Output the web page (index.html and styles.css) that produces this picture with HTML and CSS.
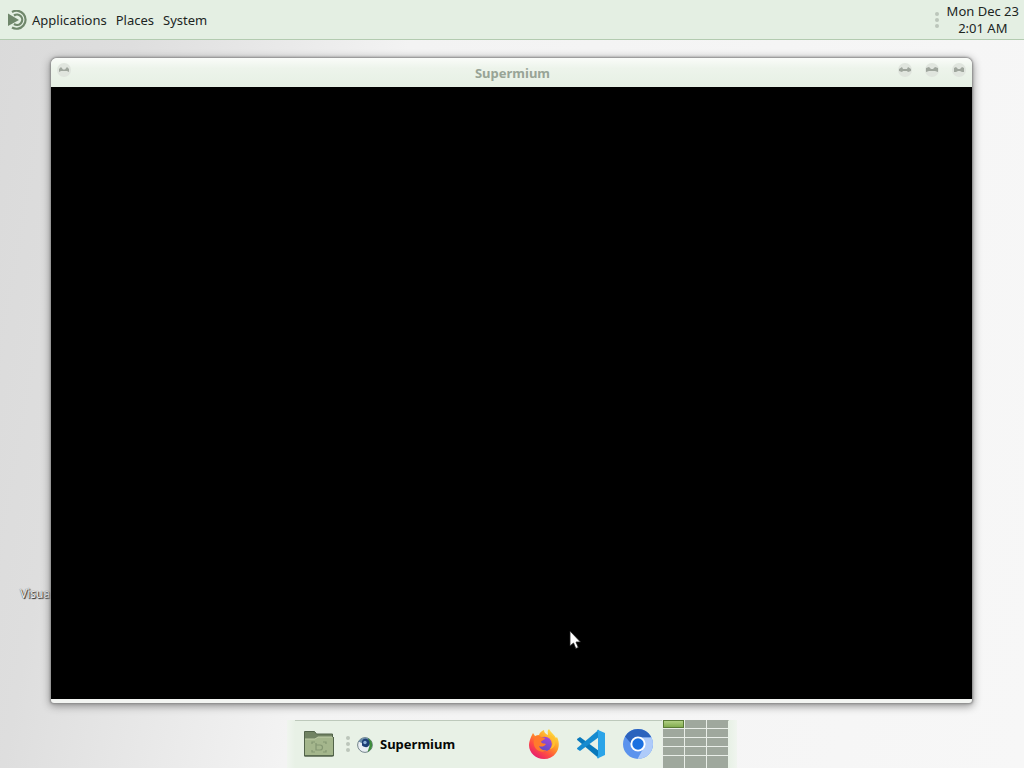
FILE: index.html
```html
<!DOCTYPE html>
<html lang="en">
<head>
<meta charset="utf-8">
<title>Desktop</title>
<link rel="stylesheet" href="styles.css">
</head>
<body>
<header class="panel">
  <nav class="menus">
    <button class="menu menu-main" type="button">
      <svg class="menu-logo" viewBox="0 0 20 20" aria-hidden="true">
        <path d="M0 3.500 11 10 0 16z" fill="#6f876b"/>
        <path d="M4 2A9 9 0 1 1 4 17.500M6 5.500A5.200 5.200 0 1 1 6 14" fill="none" stroke="#6f876b" stroke-width="2.200"/>
      </svg>
      <span>Applications</span>
    </button>
    <button class="menu" type="button">Places</button>
    <button class="menu" type="button">System</button>
  </nav>
  <div class="tray">
    <span class="grip"><i></i><i></i><i></i></span>
    <button class="clock" type="button">Mon Dec 23<br>2:01 AM</button>
  </div>
</header>

<main class="desktop">
  <a class="shortcut" href="#">Visual</a>
  <section class="window">
    <div class="titlebar">
      <button class="knob" type="button" aria-label="Window menu"><svg viewBox="0 0 16 16"><circle cx="8" cy="8" r="7"/><path d="M3 10V7l2-2 2 2.500h2L11 5l2 2v3l-2-1H5z"/></svg></button>
      <h1 class="title">Supermium</h1>
      <div class="knobs">
        <button class="knob" type="button" aria-label="Minimize"><svg viewBox="0 0 16 16"><circle cx="8" cy="8" r="7"/><path d="M2 9V7l3-2 1 2h4l1-2 3 2v2l-3 1-1-1H6l-1 1z"/></svg></button>
        <button class="knob" type="button" aria-label="Maximize"><svg viewBox="0 0 16 16"><circle cx="8" cy="8" r="7"/><path d="M2 10V6l3-1 2 2h2l2-2 3 1v4l-3-1H5z"/></svg></button>
        <button class="knob" type="button" aria-label="Close"><svg viewBox="0 0 16 16"><circle cx="8" cy="8" r="7"/><path d="M3 10V6l2-1 2 2h2l2-2 2 1v4h-2l-2-1H7l-2 1z"/></svg></button>
      </div>
    </div>
    <div class="content"></div>
  </section>
</main>

<footer class="dock">
  <div class="dock-bar">
    <button class="launcher folder" type="button" aria-label="Files">
      <svg viewBox="0 0 32 32">
        <path d="M1.500 28V3.500h10l2 2.500h16v22z" fill="#718363" stroke="#52634a"/>
        <path d="M2 27V11h10l3-2h15v18z" fill="#a4b68c"/>
        <path d="M2 11h10l3-2h14" fill="none" stroke="#c0cda9"/>
        <path d="M1.500 28h29V9" fill="none" stroke="#52634a"/>
        <path d="M9 16v-2h3M20 14h3v2M23 22v2h-3M12 24H9v-2M13 15v7h4a2.300 2.300 0 0 0 0-5h-4" fill="none" stroke="#849772" stroke-width="1.200"/>
      </svg>
    </button>
    <span class="grip"><i></i><i></i><i></i></span>
    <button class="task" type="button">
      <svg class="task-icon" viewBox="0 0 16 16" aria-hidden="true">
        <circle cx="8" cy="8" r="7.400" fill="#e9eef3" stroke="#74858b" stroke-width="1"/>
        <path d="M1.500 4.500A7.500 7.500 0 0 1 13 2.500L11 9 4.500 6z" fill="#6c8da8"/>
        <path d="M11 1.300A7.500 7.500 0 0 1 10.500 15L12.500 9z" fill="#3f8d3c"/>
        <path d="M5 4a4 4 0 0 1 7.500 2.500C12 11 8 11 5 8.500z" fill="#1d3e75"/>
        <circle cx="8" cy="5.500" r="1.700" fill="#8db0d7"/>
      </svg>
      <span>Supermium</span>
    </button>
    <div class="launchers">
      <button class="launcher" type="button" aria-label="Firefox">
        <svg viewBox="0 0 32 32">
          <defs>
            <linearGradient id="fire" x1=".85" y1=".05" x2=".2" y2=".95"><stop offset="0" stop-color="#ffe94a"/><stop offset=".4" stop-color="#ff9a25"/><stop offset=".7" stop-color="#ff4d43"/><stop offset="1" stop-color="#e51a70"/></linearGradient>
            <linearGradient id="globe" x1=".7" y1="0" x2=".3" y2="1"><stop offset="0" stop-color="#a34ad8"/><stop offset="1" stop-color="#5b4cc4"/></linearGradient>
          </defs>
          <path d="M3 9l2-4 2 3 4-1c1-3 3-4 5-5 0 3 2 4 4 5 0-3-1-4 1-6 2 4 5 5 7 9l1-1c3 6 2 12-1 16-3 4-7 6-12 6C8 31 1 25 1 17c0-3 1-5 2-8z" fill="url(#fire)"/>
          <circle cx="16.500" cy="16" r="7.300" fill="url(#globe)"/>
          <path d="M8 8c2-1 4 0 5 1l4 1c0 2-3 2-4 4 1 2 3 1 5 2-2 3-5 3-7 2 1 3 4 5 8 4-5 4-12 0-13-5-1-3 0-6 2-9z" fill="#ff7b2c"/>
          <path d="M19 8c6 1 8 8 3 13 5-1 7-7 4-11-2-3-5-4-7-2z" fill="#ffc02f"/>
        </svg>
      </button>
      <button class="launcher" type="button" aria-label="Visual Studio Code">
        <svg viewBox="0 0 32 32">
          <path d="M2 11l3-2 19 14v7.500L2.200 12z" fill="#0878bb"/>
          <path d="M2 21l3 2L24 9V1.500L2.200 20z" fill="#168bd0"/>
          <path d="M22.500 1.800 30 5v22l-7.500 3.500L22 29l1-1.500V4.500L22 3z" fill="#2ba4e8"/>
        </svg>
      </button>
      <button class="launcher" type="button" aria-label="Chromium">
        <svg viewBox="0 0 32 32">
          <circle cx="16" cy="16" r="15" fill="#5b93ed"/>
          <path d="M16 16h-6.500L3 8.500A15 15 0 0 1 29 8.500L28 9.500H16z" fill="#2c63bd"/>
          <path d="M16 9.500h13.500A15 15 0 0 1 15.500 31L22 19z" fill="#aecbfa"/>
          <circle cx="16" cy="16" r="7.600" fill="#fff"/>
          <circle cx="16" cy="16" r="5.700" fill="#1b70e0"/>
        </svg>
      </button>
    </div>
    <div class="pager">
      <span class="cell active"></span><span class="cell"></span><span class="cell"></span>
      <span class="cell"></span><span class="cell"></span><span class="cell"></span>
      <span class="cell"></span><span class="cell"></span><span class="cell"></span>
      <span class="cell"></span><span class="cell"></span><span class="cell"></span>
      <span class="cell"></span><span class="cell"></span><span class="cell"></span>
    </div>
  </div>
</footer>

<svg class="pointer" viewBox="0 0 14 20" aria-hidden="true"><path d="M1 1v15l3.500-3 2.300 5.500 2.500-1L7 12h4.500z" fill="#fff" stroke="#222" stroke-width=".8"/></svg>
</body>
</html>
```
FILE: styles.css
```css
* {
  box-sizing: border-box;
}

body {
  margin: 0;
  height: 100vh;
  display: flex;
  flex-direction: column;
  overflow: hidden;
  font-family: "Noto Sans", sans-serif;
  font-size: 13px;
  line-height: 17px;
  color: #20251f;
  background: linear-gradient(100deg, #dadada 0%, #dedede 12%, #f3f3f3 36%, #f7f7f7 100%);
}

button {
  margin: 0;
  padding: 0;
  border: 0;
  background: none;
  font: inherit;
  color: inherit;
}

svg {
  display: block;
}

.panel {
  flex: none;
  height: 40px;
  display: flex;
  justify-content: space-between;
  align-items: center;
  padding: 0 5px 0 8px;
  background: #e4efe3;
  border-bottom: 1px solid #b3cbb0;
}

.menus {
  display: flex;
  align-items: center;
  gap: 9px;
  padding-top: 1px;
}

.menu-main {
  display: flex;
  align-items: center;
  gap: 4px;
}

.menu-logo {
  width: 20px;
  height: 20px;
}

.tray {
  display: flex;
  align-items: center;
  gap: 8px;
}

.clock {
  text-align: center;
}

.grip {
  display: flex;
  flex-direction: column;
  gap: 2px;
}

.grip i {
  width: 4px;
  height: 4px;
  border-radius: 2px;
  background: #bcc6bb;
}

.desktop {
  position: relative;
  flex: 1;
  display: flex;
  padding: 18px 52px 17px 51px;
}

.shortcut {
  position: absolute;
  left: 20px;
  bottom: 118px;
  font-size: 12px;
  color: #f0f0f0;
  text-decoration: none;
  text-shadow: 1px 1px 1px #222, 0 0 1px #333;
}

.window {
  position: relative;
  flex: 1;
  display: flex;
  flex-direction: column;
  padding-bottom: 4px;
  border-radius: 6px 6px 3px 3px;
  background: #f3f5f2;
  box-shadow: 0 0 2px 1px #8c8c8c, 0 2px 9px 1px #8c8c8c;
}

.titlebar {
  height: 29px;
  display: grid;
  grid-template-columns: 1fr auto 1fr;
  align-items: center;
  padding: 0 5px;
  border-radius: 6px 6px 0 0;
  background: linear-gradient(#fafcf9, #edf4eb 35%, #e6f0e4);
}

.title {
  margin: 0;
  padding: 2px 0 0 2px;
  font-size: 13px;
  line-height: 17px;
  font-weight: 700;
  color: #98a496;
}

.knobs {
  display: flex;
  justify-content: flex-end;
  gap: 11px;
}

.knob {
  width: 16px;
  height: 16px;
  margin-bottom: 5px;
}

.knob circle {
  fill: #e0e5de;
}

.knob path {
  fill: #9fa69d;
}

.content {
  flex: 1;
  background: #000;
}

.dock {
  flex: none;
  display: flex;
  justify-content: center;
}

.dock-bar {
  display: flex;
  align-items: center;
  height: 48px;
  padding: 0 9px 0 16px;
  background:
    linear-gradient(#bdc9bb, #bdc9bb) 8px 0 / calc(100% - 16px) 1px no-repeat,
    linear-gradient(90deg, #f0f5ef 0, #e8f1e6 8px, #e8f1e6 calc(100% - 8px), #f0f5ef 100%);
}

.launcher {
  width: 32px;
  height: 32px;
}

.dock-bar > .grip {
  margin: 0 7px 0 11px;
}

.task {
  display: flex;
  align-items: center;
  gap: 7px;
  width: 171px;
  padding-top: 1px;
  font-weight: 700;
  color: #050805;
}

.task-icon {
  width: 16px;
  height: 16px;
}

.launchers {
  display: flex;
  gap: 15px;
  padding-right: 8px;
}

.pager {
  align-self: stretch;
  width: 66px;
  display: grid;
  grid-template-columns: repeat(3, 1fr);
  grid-template-rows: repeat(4, 8px) 1fr;
  gap: 1px;
  border-left: 1px solid #e9eee8;
  background: #e9eee8;
}

.cell {
  background: #9fa89d;
}

.cell.active {
  border: 1px solid #597b36;
  background: linear-gradient(#b0cf82, #83ac50);
}

.pointer {
  position: absolute;
  left: 569px;
  top: 630px;
  width: 14px;
  height: 20px;
}
```
